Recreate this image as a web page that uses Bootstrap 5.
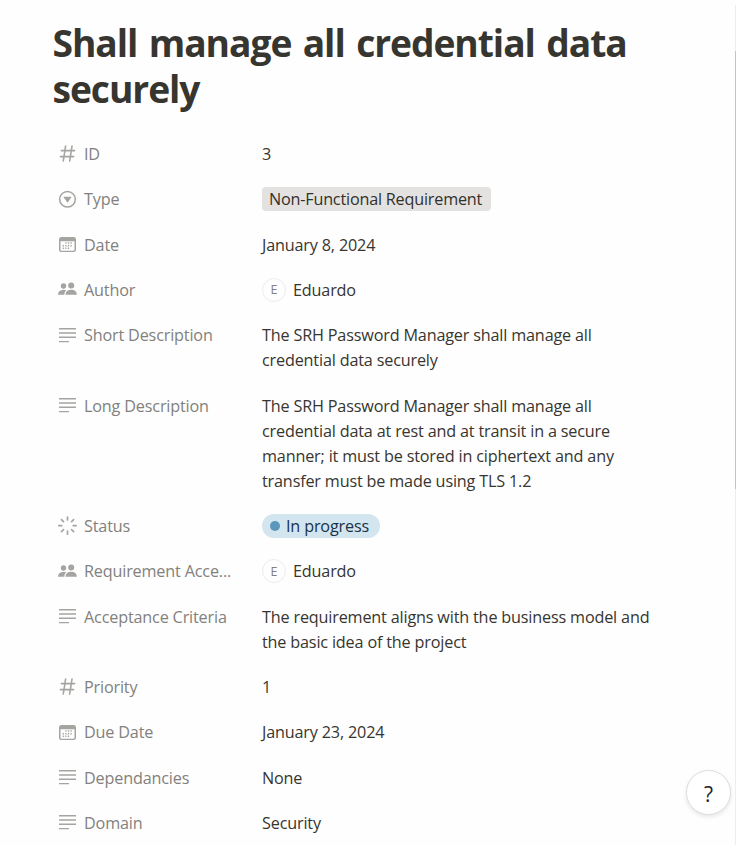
<!DOCTYPE html>
<html lang="en">
<head>
<meta charset="utf-8">
<meta name="viewport" content="width=device-width, initial-scale=1">
<title>Shall manage all credential data securely</title>
<link href="https://cdn.jsdelivr.net/npm/bootstrap@5.3.0/dist/css/bootstrap.min.css" rel="stylesheet">
<style>
  body { font-family: "Open Sans", "Noto Sans", sans-serif; font-size: 16.2px; line-height: 25px; color: #37352f; letter-spacing: -.17px; background: #fefefe; height: 845px; }
  .page-title { font-size: 37.2px; line-height: 46px; letter-spacing: -1.05px; word-spacing: 2.8px; padding: 20px 0 0 52.500px; margin-bottom: 21.6px; }
  .prop { padding: 8.3px 0; margin-bottom: 3.75px; }
  .prop-name { width: 204px; padding-left: 58px; color: #82817d; }
  .prop-name svg { width: 19px; height: 19px; fill: #a5a4a0; margin: 2.4px 7px 0 0; }
  .prop-value { padding-left: 58px; width: 520px; }
  .tag { background: #e3e2e0; border-radius: 4px; height: 24px; line-height: 25px; padding: 0 7px; color: #32302c; width: 229px; letter-spacing: -.2px; }
  .state { background: #d3e5ef; border-radius: 12px; height: 24px; line-height: 26px; width: 118px; padding-left: 8px; color: #183347; }
  .dot { width: 10px; height: 10px; background: #5b97bd; margin-right: 6px; }
  .avatar { width: 24px; height: 24px; border: 1px solid #ececeb; font-size: 12.5px; color: #82817d; margin-right: 7px; letter-spacing: 0; }
  .help { right: 5px; bottom: 30px; width: 45px; height: 45px; background: #fff; border: 1px solid #dededd; box-shadow: 0 2px 4px rgba(15,15,15,.1); font-size: 21px; }
  .track { right: 0; top: 5px; width: 1px; height: 840px; background: #ededed; }
  .thumb { height: 438px; margin-top: 46px; background: #c4c4c4; }
</style>
</head>
<body class="overflow-hidden position-relative">
<svg class="d-none">
  <symbol id="i-hash" viewBox="0 0 19 19"><path d="M7.6 2 5.3 17M14 2l-2.3 15M3.4 6.6h13.2M2.4 12.6h13.2" fill="none" stroke="#a5a4a0" stroke-width="1.6" stroke-linecap="round"/></symbol>
  <symbol id="i-select" viewBox="0 0 19 19"><circle cx="9.5" cy="9.2" r="7.8" fill="none" stroke="#a5a4a0" stroke-width="1.5"/><path d="M6 6.800h7q.5 0 .2.6l-3.300 4.800q-.4.4-.8 0L5.800 7.400Q5.500 6.800 6 6.800z"/></symbol>
  <symbol id="i-date" viewBox="0 0 19 19"><path fill-rule="evenodd" d="M3.500 2h12q2.500 0 2.500 2.500v10q0 2.500-2.500 2.500h-12Q1 17 1 14.500v-10Q1 2 3.500 2zM2.500 6.300v8.200q0 1.300 1.300 1.300h11.400q1.300 0 1.300-1.300V6.300z"/><path d="M7.300 8h6.600M4.600 10.700h9.300M4.600 13.300h6.600" fill="none" stroke="#a5a4a0" stroke-width="1.400" stroke-dasharray="1.300 1.300"/></symbol>
  <symbol id="i-people" viewBox="0 0 19 19"><circle cx="5.500" cy="6" r="2.700"/><circle cx="13.200" cy="5.500" r="3"/><path d="M0 14.700q0-4.700 5.500-5 1.500 0 2.800.6-2 1.500-2 4.400zM7.500 14.700q.3-5 5.700-5t5.700 5z"/></symbol>
  <symbol id="i-text" viewBox="0 0 19 19"><path d="M1 2h17v1.400H1zM1 6.300h17v1.400H1zM1 10.600h17V12H1zM1 14.900h10v1.400H1z"/></symbol>
  <symbol id="i-status" viewBox="0 0 19 19"><path d="M9.500 1v3M9.500 15.200v3M.8 9.600h3M15.200 9.600h3M3.500 3.600l2 2M13.600 13.700l2 2M15.600 3.600l-2 2M5.500 13.700l-2 2" fill="none" stroke="#a5a4a0" stroke-width="1.700" stroke-linecap="round"/></symbol>
</svg>

<h1 class="page-title fw-bold">Shall manage all credential data<br>securely</h1>

<main>
  <div class="prop d-flex"><div class="prop-name d-flex align-items-start flex-shrink-0"><svg class="flex-shrink-0"><use href="#i-hash"/></svg><span class="text-nowrap">ID</span></div><div class="prop-value">3</div></div>
  <div class="prop d-flex"><div class="prop-name d-flex align-items-start flex-shrink-0"><svg class="flex-shrink-0"><use href="#i-select"/></svg><span class="text-nowrap">Type</span></div><div class="prop-value"><div class="tag text-nowrap">Non-Functional Requirement</div></div></div>
  <div class="prop d-flex"><div class="prop-name d-flex align-items-start flex-shrink-0"><svg class="flex-shrink-0"><use href="#i-date"/></svg><span class="text-nowrap">Date</span></div><div class="prop-value">January 8, 2024</div></div>
  <div class="prop d-flex"><div class="prop-name d-flex align-items-start flex-shrink-0"><svg class="flex-shrink-0"><use href="#i-people"/></svg><span class="text-nowrap">Author</span></div><div class="prop-value d-flex"><div class="avatar rounded-circle d-flex align-items-center justify-content-center">E</div>Eduardo</div></div>
  <div class="prop d-flex"><div class="prop-name d-flex align-items-start flex-shrink-0"><svg class="flex-shrink-0"><use href="#i-text"/></svg><span class="text-nowrap">Short Description</span></div><div class="prop-value">The SRH Password Manager shall manage all<br>credential data securely</div></div>
  <div class="prop d-flex"><div class="prop-name d-flex align-items-start flex-shrink-0"><svg class="flex-shrink-0"><use href="#i-text"/></svg><span class="text-nowrap">Long Description</span></div><div class="prop-value">The SRH Password Manager shall manage all<br>credential data at rest and at transit in a secure<br>manner; it must be stored in ciphertext and any<br>transfer must be made using TLS 1.2</div></div>
  <div class="prop d-flex"><div class="prop-name d-flex align-items-start flex-shrink-0"><svg class="flex-shrink-0"><use href="#i-status"/></svg><span class="text-nowrap">Status</span></div><div class="prop-value"><div class="state d-flex align-items-center"><i class="dot rounded-circle"></i>In progress</div></div></div>
  <div class="prop d-flex"><div class="prop-name d-flex align-items-start flex-shrink-0"><svg class="flex-shrink-0"><use href="#i-people"/></svg><span class="text-nowrap">Requirement Acce...</span></div><div class="prop-value d-flex"><div class="avatar rounded-circle d-flex align-items-center justify-content-center">E</div>Eduardo</div></div>
  <div class="prop d-flex"><div class="prop-name d-flex align-items-start flex-shrink-0"><svg class="flex-shrink-0"><use href="#i-text"/></svg><span class="text-nowrap">Acceptance Criteria</span></div><div class="prop-value">The requirement aligns with the business model and<br>the basic idea of the project</div></div>
  <div class="prop d-flex"><div class="prop-name d-flex align-items-start flex-shrink-0"><svg class="flex-shrink-0"><use href="#i-hash"/></svg><span class="text-nowrap">Priority</span></div><div class="prop-value">1</div></div>
  <div class="prop d-flex"><div class="prop-name d-flex align-items-start flex-shrink-0"><svg class="flex-shrink-0"><use href="#i-date"/></svg><span class="text-nowrap">Due Date</span></div><div class="prop-value">January 23, 2024</div></div>
  <div class="prop d-flex"><div class="prop-name d-flex align-items-start flex-shrink-0"><svg class="flex-shrink-0"><use href="#i-text"/></svg><span class="text-nowrap">Dependancies</span></div><div class="prop-value">None</div></div>
  <div class="prop d-flex"><div class="prop-name d-flex align-items-start flex-shrink-0"><svg class="flex-shrink-0"><use href="#i-text"/></svg><span class="text-nowrap">Domain</span></div><div class="prop-value">Security</div></div>
</main>

<button class="help btn rounded-circle position-absolute p-0 d-flex align-items-center justify-content-center" type="button" aria-label="Help"><span class="pt-1">?</span></button>
<div class="track position-absolute overflow-hidden"><div class="thumb"></div></div>
<script src="https://cdn.jsdelivr.net/npm/bootstrap@5.3.0/dist/js/bootstrap.bundle.min.js"></script>
</body>
</html>
